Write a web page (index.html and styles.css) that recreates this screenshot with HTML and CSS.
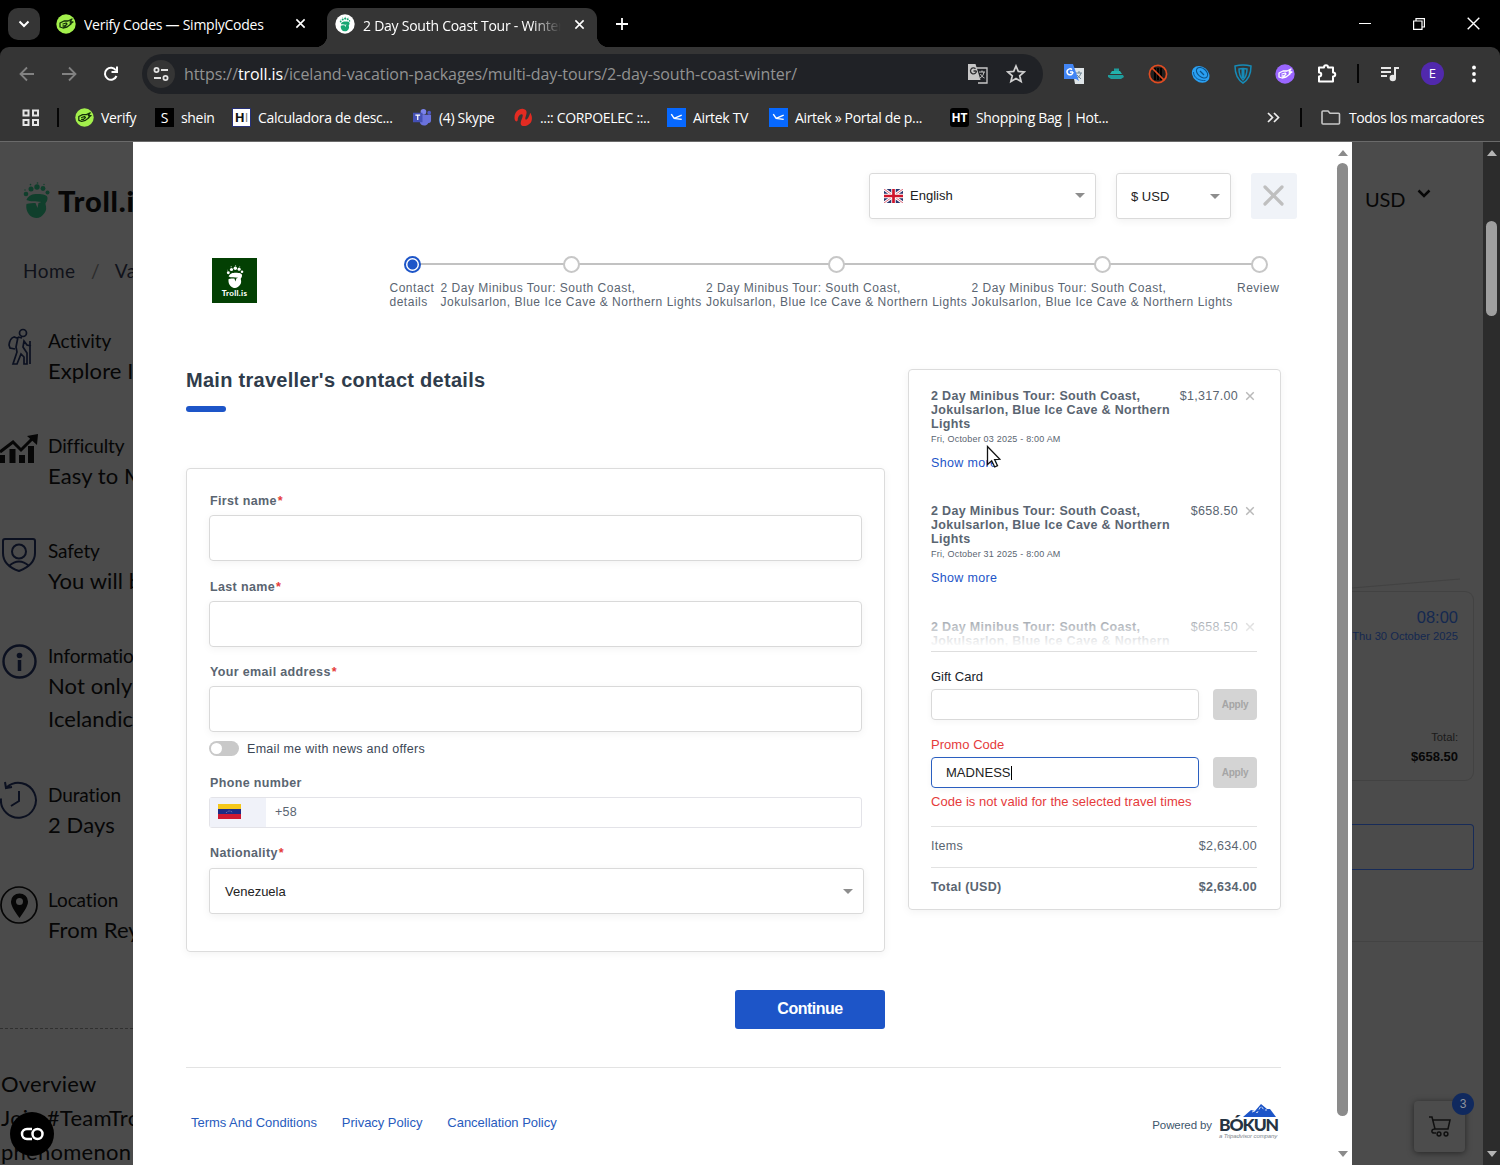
FILE: index.html
```html
<!DOCTYPE html>
<html lang="en">
<head>
<meta charset="utf-8">
<meta name="viewport" content="width=device-width,initial-scale=1">
<title>2 Day South Coast Tour - Winter</title>
<link rel="stylesheet" href="styles.css">
</head>
<body>
<svg class="defs" width="0" height="0">
<symbol id="paw" viewBox="0 0 26 36">
<circle cx="2.500" cy="12" r="2.300"/><circle cx="7.500" cy="7" r="2.500"/><circle cx="13.500" cy="5" r="2.700"/><circle cx="19.500" cy="6.500" r="2.400"/><circle cx="24" cy="10.500" r="2"/>
<circle cx="1.500" cy="8" r=".7"/><circle cx="7" cy="2.600" r=".8"/><circle cx="14" cy="1" r=".8"/><circle cx="20.500" cy="2.500" r=".7"/>
<path d="M3 18c2-5 6-6 11-6 6 0 10 1 10 4 0 4-2 4-2 6 1 4 1 6-1 9-2 3-5 5-8 5-5 0-9-4-10-9-.5-3 0-4 0-5 3-1 6-1 9-1l2 5 1-5 3-1c-6-1-11 0-15-2z"/>
</symbol>
<symbol id="hand" viewBox="0 0 20 20">
<path d="M4 9l4-2 4 0 4-2-2 3 3 0-3 2 1 0-4 3-4 1-3-1zM7 10l3-1 1 1-2 2-2 0" fill="none" stroke-width="1.300" stroke-linejoin="round" stroke-linecap="round"/>
</symbol>
<symbol id="cross" viewBox="0 0 12 12"><path d="M1.500 1.500l9 9M10.500 1.500l-9 9" fill="none" stroke="currentColor" stroke-width="1.700"/></symbol>
</svg>

<div class="tabs">
<div class="tab-menu"><svg width="12" height="8" viewBox="0 0 12 8"><path d="M1.500 1.500L6 6l4.500-4.500" fill="none" stroke="#fff" stroke-width="2"/></svg></div>
<div class="tab">
<svg class="fav" viewBox="0 0 20 20" stroke="#14300a"><circle cx="10" cy="10" r="9.700" fill="#a3f04c" stroke="none"/><use href="#hand"/></svg>
<span class="tab-title">Verify Codes — SimplyCodes</span>
<svg class="tab-x"><use href="#cross"/></svg>
</div>
<div class="tab active">
<svg class="fav" viewBox="0 0 20 20"><circle cx="10" cy="10" r="9.700" fill="#fff"/><use href="#paw" x="4.500" y="2.500" width="11" height="15" fill="#17a673"/></svg>
<span class="tab-title fade">2 Day South Coast Tour - Winter</span>
<svg class="tab-x"><use href="#cross"/></svg>
</div>
<svg class="new-tab" viewBox="0 0 14 14"><path d="M7 1v12M1 7h12" stroke="#fff" stroke-width="1.800"/></svg>
<div class="window-buttons">
<svg width="12" height="12"><path d="M0 5.500h12" stroke="#fff"/></svg>
<svg width="12" height="12" fill="none" stroke="#fff" stroke-width="1.200"><path d="M.6 3h8.400v8.400H.6zM3 3V.6h8.400V9H9"/></svg>
<svg width="13" height="13"><path d="M.7.7l11.600 11.600M12.300.7L.7 12.300" stroke="#fff" stroke-width="1.400"/></svg>
</div>
</div>

<div class="toolbar">
<div class="nav">
<svg width="16" height="16" fill="none" stroke="#828282" stroke-width="1.800"><path d="M15 8H2M8 1.500L1.500 8 8 14.500"/></svg>
<svg width="16" height="16" fill="none" stroke="#828282" stroke-width="1.800"><path d="M1 8h13M8 1.500L14.500 8 8 14.500"/></svg>
<svg width="16" height="16" fill="none" stroke="#fff" stroke-width="2"><path d="M13.500 10A6 6 0 1 1 13 4.500M14 .5V6H8.500"/></svg>
</div>
<div class="address">
<div class="site-info"><svg width="16" height="14" fill="none" stroke="#e3e3e3" stroke-width="1.800"><circle cx="3.500" cy="3" r="2.100"/><path d="M8 3h7M1 11h7"/><circle cx="12.500" cy="11" r="2.100"/></svg></div>
<span class="url">https://<b>troll.is</b>/iceland-vacation-packages/multi-day-tours/2-day-south-coast-winter/</span>
<svg class="translate" width="20" height="20" viewBox="0 0 20 20"><path d="M8 4h11v15H10" fill="none" stroke="#c7c7c7" stroke-width="1.300"/><path d="M0 0h7.500l5 16H0z" fill="#c7c7c7"/><path d="M8.500 7H5.500M8.500 7a3 3 0 1 1-1-2.300" fill="none" stroke="#303134" stroke-width="1.300"/><path d="M11 8h6M14 6.500V8M16 8c-.5 3-2 5-4 6M12.500 10c1 2 2 3 4 4" fill="none" stroke="#c7c7c7"/></svg>
<svg width="20" height="20" viewBox="0 0 20 20"><path d="M10 2l2.300 5.400 5.900.5-4.500 3.900 1.400 5.700-5.100-3-5.100 3 1.400-5.700L1.800 7.900l5.900-.5z" fill="none" stroke="#d0d0d0" stroke-width="1.700"/></svg>
</div>
<div class="extensions">
<svg viewBox="0 0 20 20"><path d="M8 4h12v16H11z" fill="#dfe5e8"/><path d="M12 9h6M15 7v2M17 9c-1 3-2 4-4 5M13 11l4 4" stroke="#6c8494" fill="none"/><path d="M0 0h9l6 17-3-2H0z" fill="#4285f4"/><path d="M9 8H6M9 8a3 3 0 1 1-1-2.400" fill="none" stroke="#fff" stroke-width="1.500"/></svg>
<svg viewBox="0 0 20 20"><path d="M2 11h15l1 2-3 2H5l-3-2z" fill="#1f9c9c"/><path d="M6 7h8l2 3H4z" fill="#23b3ac"/><path d="M8 4.500h5V7H8z" fill="#1f9c9c"/></svg>
<svg viewBox="0 0 20 20"><circle cx="10" cy="10" r="8.600" fill="#231f1d" stroke="#df4c22" stroke-width="1.700"/><path d="M7 4v12M10 4v12M13 4v12" stroke="#000" stroke-width="2"/><path d="M4 4l12 12" stroke="#df4c22" stroke-width="1.700"/></svg>
<svg viewBox="0 0 20 20"><ellipse cx="10" cy="10.500" rx="9.500" ry="7.700" transform="rotate(40 10 10)" fill="#2aa0f2"/><ellipse cx="11.500" cy="8.500" rx="6.500" ry="4.200" transform="rotate(40 11 8)" fill="none" stroke="#0d5288" stroke-width="1.100"/><path d="M9 7l4 4" stroke="#0d5288" stroke-width="1.300"/><path d="M2.500 8c0 6 6 9 12 8.500" stroke="#0d5b9b" fill="none"/></svg>
<svg viewBox="0 0 20 20" fill="none" stroke="#168bb7" stroke-width="1.500"><path d="M2 2q8-2 16 0 0 12-8 17Q2 14 2 2z"/><path d="M6 5q4-1 8 0 0 7-4 11Q6 12 6 5z"/><path d="M10 5v9" stroke-width="3"/></svg>
<svg viewBox="0 0 20 20" stroke="#fff"><circle cx="10" cy="10" r="9.700" fill="#9a66ff" stroke="none"/><use href="#hand"/></svg>
<svg viewBox="0 0 20 20" fill="none" stroke="#fff" stroke-width="2"><path d="M2 3.500h5c0-3 4-3 4 0h5v5c3 0 3 4 0 4v5H2v-5c3-.3 3-4 0-4z" stroke-linejoin="round"/></svg>
<i class="sep"></i>
<svg viewBox="0 0 20 20" fill="none" stroke="#e8e8e8" stroke-width="2"><path d="M1 4h10M1 8h10M1 12h6M15 14V4h4"/><circle cx="12.800" cy="14" r="2.200" fill="#e8e8e8"/></svg>
<span class="avatar">E</span>
<svg viewBox="0 0 20 20" fill="#fff"><circle cx="10" cy="3.500" r="1.900"/><circle cx="10" cy="10" r="1.900"/><circle cx="10" cy="16.500" r="1.900"/></svg>
</div>
</div>

<div class="bookmarks">
<svg width="18" height="18" fill="none" stroke="#e6e6e6" stroke-width="2"><path d="M1.500 1.500h5v5h-5zM11 1.500h5v5h-5zM1.500 11h5v5h-5zM11 11h5v5h-5z"/></svg>
<i class="sep"></i>
<a><svg class="bm" viewBox="0 0 20 20" stroke="#14300a"><circle cx="10" cy="10" r="9.700" fill="#a3f04c" stroke="none"/><use href="#hand"/></svg>Verify</a>
<a><span class="bm black">S</span>shein</a>
<a><span class="bm hi"><b>H</b>I</span>Calculadora de desc...</a>
<a><svg class="bm" viewBox="0 0 20 20"><circle cx="11" cy="4" r="3" fill="#7b83eb"/><circle cx="17" cy="5" r="2" fill="#5059c9"/><path d="M7 7h12v6c0 3-3 3-3 3-2 4-9 3-9-2z" fill="#6a72dc"/><rect x="0" y="5" width="10" height="10" fill="#4450b5"/><path d="M2.500 7.500h5M5 7.500v5" stroke="#fff" stroke-width="1.300"/></svg>(4) Skype</a>
<a><svg class="bm" viewBox="0 0 20 20"><path d="M1 13C-1 6 4 0 10 1c5 1 3 6 2 9-1 4 3 3 5-5 3 4 2 9 0 11-4 4-10 4-10 0 0-3 3-7 2-9-2-2-5 2-5 5 0 2-2 3-3 1z" fill="#e22b22"/></svg>..:: CORPOELEC ::..</a>
<a><svg class="bm" viewBox="0 0 20 20"><rect width="20" height="20" fill="#0668ff"/><path d="M4.500 6.500l3 4.500 8 1M7.500 11l8-3.500" fill="none" stroke="#fff" stroke-width="1.500"/></svg>Airtek TV</a>
<a><svg class="bm" viewBox="0 0 20 20"><rect width="20" height="20" fill="#0668ff"/><path d="M4.500 6.500l3 4.500 8 1M7.500 11l8-3.500" fill="none" stroke="#fff" stroke-width="1.500"/></svg>Airtek » Portal de p...</a>
<a><span class="bm black ht">HT</span>Shopping Bag | Hot...</a>
<svg width="13" height="11" fill="none" stroke="#eee" stroke-width="1.700"><path d="M1 1l4.500 4.500L1 10M7 1l4.500 4.500L7 10"/></svg>
<i class="sep"></i>
<a class="all"><svg width="20" height="15" fill="none" stroke="#c7c7c7" stroke-width="1.600"><path d="M1 2q0-1 1-1h5l2 2.200h8.500q1 0 1 1V13q0 1-1 1H2q-1 0-1-1z"/></svg>Todos los marcadores</a>
</div>

<div class="viewport">
<div class="page-left">
<div class="brand"><svg width="27" height="36" fill="#103f2c"><use href="#paw"/></svg>Troll.is</div>
<div class="crumbs">Home <span>/</span> Vacation</div>
<div class="facts">
<div class="fact">
<svg width="40" height="40" fill="none" stroke="#0b1020" stroke-width="1.700"><circle cx="23" cy="6" r="3.500"/><path d="M17 11l-3-1q-4 1-5 8l1 3 5 1M18 10l-2 10 1 5-4 12h4l4-10 3 3v7h3V26l-4-6 1-6 3 4 4 1M18 10l4 1M30 14v23"/></svg>
<div><p>Activity</p><strong>Explore Iceland</strong></div>
</div>
<div class="fact">
<svg width="40" height="40"><path d="M0 20l13-10 8 8L33 6" fill="none" stroke="#060606" stroke-width="3"/><path d="M27 4l11-2-1 11z" fill="#060606"/><path d="M2 31v-8M12.500 31V17M22 31v-8M31 31V14" stroke="#060606" stroke-width="6"/></svg>
<div><p>Difficulty</p><strong>Easy to Moderate</strong></div>
</div>
<div class="fact">
<svg width="40" height="40" fill="none" stroke="#0b1020" stroke-width="2"><path d="M3 4q0-2 2-2h28q2 0 2 2v12c0 9-8 15-16 18C10 31 3 25 3 16z"/><circle cx="19" cy="14.500" r="7"/><path d="M9 29q10-9 20 0"/></svg>
<div><p>Safety</p><strong>You will be safe</strong></div>
</div>
<div class="fact info">
<svg width="40" height="40" fill="none" stroke="#0b1020"><circle cx="19.500" cy="19.500" r="16" stroke-width="2.400"/><circle cx="19.500" cy="13.500" r="2.800" fill="#0b1020" stroke="none"/><path d="M19.500 18v11" stroke-width="3.500"/></svg>
<div><p>Information</p><strong>Not only see<br>Icelandic nature</strong></div>
</div>
<div class="fact">
<svg width="40" height="40" fill="none" stroke="#0b1020" stroke-width="2"><path d="M1 17.500A17.500 17.500 0 1 0 7 6M5 1l1 6 6-1M19 10v10l-8 5"/></svg>
<div><p>Duration</p><strong>2 Days</strong></div>
</div>
<div class="fact">
<svg width="40" height="40"><circle cx="19" cy="19" r="18" fill="none" stroke="#060606" stroke-width="1.700"/><path d="M19.500 32C14 24 11 20 11 15.500a8.500 8 0 0 1 17 0C28 20 25 24 19.500 32z" fill="#060606"/><circle cx="19.500" cy="15.500" r="3.500" fill="#4b4b4b"/></svg>
<div><p>Location</p><strong>From Reykjavik</strong></div>
</div>
</div>
<div class="overview">Overview<br>Join #TeamTroll<br>phenomenon</div>
<div class="chat"><svg width="24" height="14" fill="none" stroke="#fff" stroke-width="2.500"><path d="M12 2H7a5 5 0 0 0 0 10h5"/><circle cx="17.500" cy="7" r="5"/></svg></div>
</div>

<div class="modal">
<div class="modal-body">
<div class="modal-top">
<div class="select lang"><svg width="19" height="14" viewBox="0 0 19 14"><path d="M0 0h19v14H0z" fill="#28366f"/><path d="M0 0l19 14M19 0L0 14" stroke="#fff" stroke-width="3"/><path d="M0 0l19 14M19 0L0 14" stroke="#dc6578" stroke-width="1"/><path d="M9.500 0v14M0 7h19" stroke="#fff" stroke-width="4.500"/><path d="M9.500 0v14M0 7h19" stroke="#cf142b" stroke-width="2.700"/></svg>English</div>
<div class="select currency">$ USD</div>
<div class="close"><svg width="21" height="21" viewBox="0 0 21 21"><path d="M2 2l17 17M19 2L2 19" stroke="#bfbfbf" stroke-width="3.200" stroke-linecap="round"/></svg></div>
</div>
<div class="progress">
<div class="logo"><svg width="18" height="23" fill="#fff"><use href="#paw"/></svg>Troll.is</div>
<div class="steps">
<div class="step current"><i></i><span>Contact details</span></div>
<div class="step"><i></i><span>2 Day Minibus Tour: South Coast,<br>Jokulsarlon, Blue Ice Cave &amp; Northern Lights</span></div>
<div class="step"><i></i><span>2 Day Minibus Tour: South Coast,<br>Jokulsarlon, Blue Ice Cave &amp; Northern Lights</span></div>
<div class="step"><i></i><span>2 Day Minibus Tour: South Coast,<br>Jokulsarlon, Blue Ice Cave &amp; Northern Lights</span></div>
<div class="step"><i></i><span>Review</span></div>
</div>
</div>
<div class="columns">
<div class="main">
<h1>Main traveller's contact details</h1>
<form class="card contact">
<label>First name<em>*</em></label>
<div class="input"></div>
<label>Last name<em>*</em></label>
<div class="input"></div>
<label>Your email address<em>*</em></label>
<div class="input"></div>
<div class="news"><i class="toggle"></i>Email me with news and offers</div>
<label>Phone number</label>
<div class="phone"><span class="flag"><svg width="23" height="15"><path d="M0 0h23v5H0z" fill="#f5c81b"/><path d="M0 5h23v5H0z" fill="#1d2b85"/><path d="M0 10h23v5H0z" fill="#cf1931"/><path d="M8 9q3.500-4 7 0" fill="none" stroke="#8c93c4" stroke-dasharray="1 1"/></svg></span>+58</div>
<label>Nationality<em>*</em></label>
<div class="select nation">Venezuela</div>
</form>
<button class="continue">Continue</button>
</div>
<div class="card summary">
<div class="items">
<div class="item"><div class="item-row"><b>2 Day Minibus Tour: South Coast, Jokulsarlon, Blue Ice Cave &amp; Northern Lights</b><span>$1,317.00</span><svg><use href="#cross"/></svg></div><small>Fri, October 03 2025 - 8:00 AM</small><a>Show more</a></div>
<div class="item"><div class="item-row"><b>2 Day Minibus Tour: South Coast, Jokulsarlon, Blue Ice Cave &amp; Northern Lights</b><span>$658.50</span><svg><use href="#cross"/></svg></div><small>Fri, October 31 2025 - 8:00 AM</small><a>Show more</a></div>
<div class="item"><div class="item-row"><b>2 Day Minibus Tour: South Coast, Jokulsarlon, Blue Ice Cave &amp; Northern Lights</b><span>$658.50</span><svg><use href="#cross"/></svg></div></div>
</div>
<div class="code">
<p>Gift Card</p>
<div class="code-row"><div class="code-input"></div><button>Apply</button></div>
</div>
<div class="code error">
<p>Promo Code</p>
<div class="code-row"><div class="code-input">MADNESS<i></i></div><button>Apply</button></div>
<p class="message">Code is not valid for the selected travel times</p>
</div>
<div class="sum"><span>Items</span><span>$2,634.00</span></div>
<div class="sum total"><span>Total (USD)</span><span>$2,634.00</span></div>
<svg class="cursor" width="15" height="24"><path d="M1.500 1.500v18l4.200-3.800 3 6.300 2.800-1.300-2.900-6 5.300-.4z" fill="#fff" stroke="#111" stroke-width="1.300"/></svg>
</div>
</div>
<div class="footer">
<a>Terms And Conditions</a><a>Privacy Policy</a><a>Cancellation Policy</a>
<span class="powered">Powered by</span>
<div class="bokun"><svg width="34" height="14"><path d="M0 13L8 6l4 1 6-7 6 5 3 0 6 8z" fill="#1d55c8"/><path d="M9 8l3-1 2 2 4-7 3 4 3 0" fill="none" stroke="#fff" stroke-width=".8" stroke-dasharray="3 2"/></svg><b>BÓKUN</b><small>a Tripadvisor company</small></div>
</div>
</div>
<div class="scroll light"><i></i></div>
</div>

<div class="page-right">
<div class="usd">USD <svg width="14" height="9"><path d="M1.500 1.500L7 7l5.500-5.500" fill="none" stroke="#070707" stroke-width="2.500"/></svg></div>
<div class="booking">
<svg class="fold" width="108" height="11"><path d="M0 10L108 1" stroke="#424242"/></svg>
<div class="trip">
<div class="time">08:00</div>
<div class="date">Thu 30 October 2025</div>
<div class="total-label">Total:</div>
<div class="price">$658.50</div>
</div>
<div class="book-box"></div>
</div>
<div class="cart"><svg width="24" height="22" viewBox="0 0 24 22" fill="none" stroke="#101010" stroke-width="1.500"><path d="M1 1h3l3 12h13l2-9H5M7 13c-4 0-4 4-1 4h2"/><circle cx="11" cy="18" r="1.900"/><circle cx="18" cy="18" r="1.900"/></svg><span>3</span></div>
</div>
<div class="scroll dark"><i></i></div>
</div>
</body>
</html>
```
FILE: styles.css
```css
* {
    box-sizing: border-box;
}

html, body {
    overflow: hidden;
    margin: 0;
    padding: 0;
    width: 100%;
    height: 100%;
}

body {
    background: #000;
    font-family: "Liberation Sans", Arial, sans-serif;
    white-space: nowrap;
}

p, h1 {
    margin: 0;
}

svg {
    flex: none;
    display: block;
}

.defs {
    position: absolute;
}

/* browser chrome */
.tabs, .toolbar, .bookmarks {
    display: flex;
    align-items: center;
    color: #fff;
    font-family: "Open Sans", "Noto Sans", sans-serif;
    font-size: 14px;
}

.tabs {
    height: 47px;
    padding-left: 8px;
}

.tab-menu {
    width: 32px;
    height: 32px;
    border-radius: 10px;
    background: #353535;
    display: flex;
    align-items: center;
    justify-content: center;
}

.tab {
    display: flex;
    align-items: center;
    width: 287px;
    padding: 0 21px 0 16px;
}

.tab.active {
    position: relative;
    width: 270px;
    height: 39px;
    align-self: flex-end;
    padding: 0 12px 7px 8px;
    background: #353535;
    border-radius: 11px 11px 0 0;
}

.tab.active::before, .tab.active::after {
    content: "";
    position: absolute;
    bottom: 0;
    width: 12px;
    height: 12px;
}

.tab.active::before {
    left: -12px;
    background: radial-gradient(circle at 0 0, transparent 12px, #353535 12.5px);
}

.tab.active::after {
    right: -12px;
    background: radial-gradient(circle at 100% 0, transparent 12px, #353535 12.5px);
}

.fav {
    width: 20px;
    height: 20px;
    margin-right: 8px;
}

.tab-title {
    flex: 1;
    overflow: hidden;
    padding-top: 2px;
    letter-spacing: -0.25px;
}

.fade {
    margin-right: 13px;
    -webkit-mask-image: linear-gradient(90deg, #000 85%, transparent);
    mask-image: linear-gradient(90deg, #000 85%, transparent);
}

.tab-x {
    width: 11px;
    height: 11px;
}

.new-tab {
    width: 14px;
    height: 14px;
    margin-left: 18px;
}

.window-buttons {
    margin-left: auto;
    display: flex;
    align-items: center;
    gap: 42px;
    padding-right: 20px;
}

.toolbar {
    height: 53px;
    background: #353535;
    border-radius: 9px 9px 0 0;
}

.nav {
    display: flex;
    gap: 26px;
    padding-left: 19px;
    width: 142px;
}

.address {
    width: 901px;
    height: 40px;
    border-radius: 20px;
    background: #202226;
    display: flex;
    align-items: center;
    padding: 0 17px 0 5px;
}

.site-info {
    width: 28px;
    height: 28px;
    border-radius: 50%;
    background: #353535;
    display: flex;
    align-items: center;
    justify-content: center;
    margin-right: 9px;
}

.url {
    flex: 1;
    padding-top: 1px;
    color: #929292;
    font-size: 16px;
    letter-spacing: -0.08px;
}

.url b {
    color: #fff;
    font-weight: 400;
}

.translate {
    margin-right: 18px;
}

.extensions {
    display: grid;
    grid-template-columns: repeat(7, 42.2px) 20px 43px 42px 42px;
    align-items: center;
    justify-items: center;
    margin-left: 10px;
}

.extensions svg {
    width: 20px;
    height: 20px;
}

.sep {
    width: 2px;
    height: 19px;
    background: #050505;
}

.avatar {
    width: 23px;
    height: 23px;
    border-radius: 50%;
    background: #5129ad;
    font-size: 13px;
    line-height: 23px;
    text-align: center;
}

.bookmarks {
    display: grid;
    grid-template-columns: 35px 18px 80px 77px 181px 101px 153px 102px 181px 317px 33px 21px 170px;
    height: 42px;
    padding: 0 0 6px 22px;
    background: #353535;
    border-bottom: 1px solid #6a6a6a;
}

.bookmarks a {
    display: flex;
    align-items: center;
    letter-spacing: -0.33px;
}

.bookmarks .all {
    letter-spacing: -0.45px;
}

.all svg {
    margin-right: 8px;
}

.bm {
    width: 19px;
    height: 19px;
    margin-right: 7px;
    line-height: 19px;
    text-align: center;
    letter-spacing: 0;
    flex: none;
}

.black {
    background: #000;
}

.ht {
    border-radius: 3px;
    font-size: 12px;
    font-weight: 700;
}

.hi {
    background: #fff;
    color: #777;
    border: 1px solid #263078;
    line-height: 17px;
    font-size: 13px;
}

.hi b {
    color: #111;
}

/* viewport */
.viewport {
    display: flex;
    height: 1023px;
    background: #4b4b4b;
}

.page-left {
    position: relative;
    width: 133px;
    overflow: hidden;
    color: #060606;
    font-family: Lato, sans-serif;
    padding-top: 39px;
}

.brand {
    display: flex;
    align-items: center;
    height: 38px;
    padding-left: 23px;
    gap: 8px;
    font-size: 29px;
    font-weight: 900;
    letter-spacing: 0.8px;
}

.crumbs {
    padding-left: 23px;
    margin-top: 38px;
    line-height: 28px;
    font-size: 19px;
    letter-spacing: 0.5px;
    color: #10121a;
}

.crumbs span {
    margin: 0 10px;
    color: #2a2a2a;
}

.facts {
    margin-top: 42px;
    height: 702px;
    border-bottom: 1px dashed #303030;
}

.fact {
    display: flex;
    gap: 8px;
    height: 105px;
}

.fact.info {
    height: 139px;
}

.fact p {
    font-size: 19px;
    line-height: 28px;
    letter-spacing: -0.1px;
}

.fact strong {
    font-weight: 400;
    font-size: 22px;
    line-height: 32.5px;
    letter-spacing: 0.1px;
    display: block;
}

.overview {
    margin: 38px 0 0 1px;
    font-size: 22px;
    line-height: 34px;
    letter-spacing: 0.25px;
}

.chat {
    position: absolute;
    left: 10px;
    top: 970px;
    width: 44px;
    height: 44px;
    border-radius: 50%;
    background: #000;
    display: flex;
    align-items: center;
    justify-content: center;
}

/* checkout */
.modal {
    width: 1219px;
    background: #fff;
    display: flex;
    color: #5a6571;
}

.modal-body {
    width: 1201px;
    padding: 31px 53px 0 53px;
}

.modal-top {
    display: flex;
    gap: 20px;
    justify-content: flex-end;
    margin-right: -16px;
}

.select {
    display: flex;
    align-items: center;
    height: 46px;
    padding-left: 15px;
    border: 1px solid #dadada;
    border-radius: 3px;
    box-shadow: 0 2px 8px rgba(0, 0, 0, 0.06);
    color: #222;
    font-size: 13px;
}

.select::after {
    content: "";
    margin: 0 10px 0 auto;
    border: 5px solid transparent;
    border-top-color: #8d8d8d;
    border-bottom: 0;
}

.lang {
    width: 227px;
    padding-left: 14px;
    padding-bottom: 1px;
    gap: 7px;
}

.currency {
    width: 115px;
    padding-left: 14px;
    padding-top: 1px;
}

.close {
    width: 46px;
    height: 46px;
    padding: 0 1px 1px 0;
    background: #f0f3f8;
    border-radius: 3px;
    display: flex;
    align-items: center;
    justify-content: center;
}

.progress {
    display: flex;
    height: 113px;
    margin-top: 36px;
    padding-left: 26px;
}

.logo {
    width: 46px;
    height: 45px;
    margin: 3px 132.5px 0 0;
    background: #034003;
    color: #fff;
    display: flex;
    flex-direction: column;
    align-items: center;
    padding-top: 7px;
    font: 900 8px/10px Lato, sans-serif;
    letter-spacing: 0.3px;
}

.steps {
    position: relative;
    display: grid;
    grid-template-columns: 46.5px 261px 261px 261px 44px;
    gap: 4.5px;
    font-size: 12px;
    line-height: 14px;
    letter-spacing: 0.51px;
}

.steps::before {
    content: "";
    position: absolute;
    left: 23px;
    right: 22px;
    top: 8px;
    height: 2px;
    background: #c2c2c2;
}

.step {
    display: flex;
    flex-direction: column;
    align-items: center;
}

.step i {
    position: relative;
    width: 17px;
    height: 17px;
    border: 2px solid #c7c7c7;
    border-radius: 50%;
    background: #fff;
    margin: 1px 0 8px;
}

.step.current i {
    border: 2px solid #1d55c8;
    background: radial-gradient(circle, #1d55c8 4.5px, #fff 5.5px);
}

.step.current span {
    width: 46px;
    white-space: normal;
}

.step span {
    align-self: flex-start;
}

.columns {
    display: flex;
    gap: 23px;
    align-items: flex-start;
}

.main {
    width: 699px;
    height: 700px;
    display: flex;
    flex-direction: column;
}

h1 {
    color: #2f3c4b;
    font-size: 20px;
    line-height: 24px;
    height: 100px;
    letter-spacing: 0.28px;
}

h1::after {
    content: "";
    display: block;
    width: 40px;
    height: 6px;
    margin-top: 14px;
    border-radius: 3px;
    background: #1d55c8;
}

.card {
    border: 1px solid #dcdcdc;
    border-radius: 4px;
    box-shadow: 0 2px 8px rgba(0, 0, 0, 0.05);
}

.contact {
    height: 484px;
    padding: 24px 20px 0 22px;
}

label {
    display: block;
    line-height: 16px;
    margin: 0 0 6px 1px;
    font-size: 12.5px;
    font-weight: 700;
    letter-spacing: 0.35px;
}

label em {
    color: #e53b3b;
    font-style: normal;
    margin-left: 1px;
}

.input {
    width: 653px;
    height: 46px;
    margin-bottom: 17.5px;
    border: 1px solid #d9d9d9;
    border-radius: 4px;
    box-shadow: 0 2px 8px rgba(0, 0, 0, 0.05);
}

.news {
    display: flex;
    align-items: center;
    height: 16px;
    margin: -9px 0 18px;
    color: #3c4756;
    font-size: 12.5px;
    letter-spacing: 0.3px;
    gap: 8px;
}

.toggle {
    width: 30px;
    height: 15px;
    border-radius: 8px;
    padding: 2px;
    background: #c9c9c9;
}

.toggle::after {
    content: "";
    display: block;
    width: 11px;
    height: 11px;
    border-radius: 50%;
    background: #fff;
}

.phone {
    display: flex;
    align-items: center;
    gap: 9px;
    width: 653px;
    height: 31px;
    margin-bottom: 17px;
    border: 1px solid #e3e3e8;
    border-radius: 3px;
    font-size: 12.5px;
    letter-spacing: 0.3px;
}

.flag {
    width: 56px;
    height: 29px;
    padding: 6px 0 0 8px;
    background: #f0f2f9;
}

.nation {
    width: 655px;
    margin-top: 7px;
    padding-top: 2px;
}

.continue {
    width: 150px;
    height: 39px;
    margin: 38px 0 0 auto;
    padding-bottom: 2px;
    border: 0;
    border-radius: 3px;
    background: #1d55c8;
    color: #fff;
    font: 700 16px "Liberation Sans", sans-serif;
    letter-spacing: -0.5px;
}

.summary {
    position: relative;
    width: 373px;
    height: 541px;
    padding: 19px 23px 0 22px;
    margin-top: 1px;
}

.items {
    position: relative;
    height: 263px;
    overflow: hidden;
    border-bottom: 1px solid #dedede;
}

.items::after {
    content: "";
    position: absolute;
    left: 0;
    right: 0;
    bottom: 0;
    height: 38px;
    background: linear-gradient(rgba(255, 255, 255, 0.3), #fff 90%);
}

.item {
    height: 115.3px;
    font-size: 12.5px;
    line-height: 14px;
}

.item-row {
    display: flex;
    letter-spacing: 0.3px;
}

.item b {
    width: 242px;
    white-space: normal;
    letter-spacing: 0.32px;
}

.item-row span {
    margin-left: auto;
}

.item-row svg {
    width: 10px;
    height: 10px;
    margin: 2px 2px 0 7px;
    color: #b8b8b8;
}

.item small {
    display: block;
    font-size: 9px;
    line-height: 16px;
    letter-spacing: 0.2px;
}

.item a {
    display: block;
    margin-top: 9px;
    color: #1d55c8;
    letter-spacing: 0.33px;
}

.cursor {
    position: absolute;
    left: 77px;
    top: 75px;
}

.code {
    height: 68px;
    padding-top: 17px;
    color: #20242c;
    font-size: 13px;
    line-height: 16px;
}

.code-row {
    display: flex;
    gap: 14px;
    margin-top: 4px;
}

.code-input {
    display: flex;
    align-items: center;
    width: 268px;
    height: 31px;
    padding-left: 14px;
    border: 1px solid #d9d9d9;
    border-radius: 4px;
    box-shadow: 0 2px 6px rgba(0, 0, 0, 0.04);
    color: #222;
}

.code-input i {
    width: 1px;
    height: 14px;
    background: #000;
}

.code-row button {
    width: 44px;
    height: 31px;
    padding: 0 0 1px;
    border: 0;
    border-radius: 4px;
    background: #d4d4d4;
    color: #a5a5a5;
    font: 700 10px "Liberation Sans", sans-serif;
    letter-spacing: -0.3px;
}

.error {
    height: 106px;
    color: #e53b3b;
    letter-spacing: 0.04px;
}

.error .code-input {
    border: 1.5px solid #2b5fc0;
}

.message {
    margin-top: 6px;
}

.sum {
    display: flex;
    justify-content: space-between;
    height: 41px;
    border-top: 1px solid #e2e2e2;
    line-height: 39px;
    font-size: 12.5px;
    letter-spacing: 0.3px;
}

.total {
    font-weight: 700;
}

.footer {
    display: flex;
    width: 1095px;
    height: 98px;
    padding: 12px 4px 0 5px;
    border-top: 1px solid #e3e3e3;
    margin-top: -1px;
    align-items: center;
    gap: 25px;
    font-size: 13px;
}

.footer a {
    color: #285bbd;
    letter-spacing: -0.03px;
}

.powered {
    margin: 5px -18px 0 auto;
    color: #41566c;
    font-size: 11.5px;
    letter-spacing: -0.1px;
}

.bokun {
    display: flex;
    flex-direction: column;
    width: 58px;
    color: #253442;
}

.bokun svg {
    align-self: flex-end;
}

.bokun b {
    font: 900 17.5px/14px Lato, sans-serif;
    letter-spacing: -1.1px;
}

.bokun small {
    font-size: 6px;
    line-height: 9px;
    font-style: italic;
    letter-spacing: -0.1px;
    color: #7d858c;
}

/* scrollbars */
.scroll {
    width: 17px;
    display: flex;
    flex-direction: column;
    align-items: center;
}

.scroll::before, .scroll::after {
    content: "";
    border: 5.5px solid transparent;
}

.scroll::before {
    margin-top: 8px;
    border-top: 0;
    border-bottom: 6px solid #8b8b8b;
}

.scroll::after {
    margin: auto 0 8px;
    border-bottom: 0;
    border-top: 6px solid #8b8b8b;
}

.scroll i {
    width: 11px;
    border-radius: 6px;
    background: #8b8b8b;
}

.light i {
    height: 953px;
    margin-top: 7px;
}

.dark {
    background: #2c2c2c;
}

.dark i {
    height: 95px;
    margin-top: 65px;
    background: #9f9f9f;
}

.dark::before {
    border-bottom-color: #b5b5b5;
}

.dark::after {
    border-top-color: #b5b5b5;
}

/* page behind, right side */
.page-right {
    position: relative;
    width: 131px;
    padding-top: 43px;
    color: #070707;
}

.usd {
    display: flex;
    gap: 12px;
    padding-left: 13px;
    font: 20px/28px Lato, sans-serif;
    letter-spacing: -0.2px;
}

.usd svg {
    margin-top: 4px;
}

.booking {
    height: 434px;
    padding-top: 71px;
    margin-top: 295px;
    border-bottom: 1px solid #434343;
}

.fold {
    margin: -1px 0 2px;
}

.trip {
    width: 122px;
    height: 190px;
    border: 1px solid #424242;
    border-left: 0;
    border-radius: 0 9px 9px 0;
    padding: 15px 15px 0 0;
    display: flex;
    flex-direction: column;
    align-items: flex-end;
}

.time, .date {
    color: #142850;
}

.time {
    font-size: 16.5px;
    line-height: 20px;
}

.date {
    font-size: 11.2px;
    line-height: 18px;
}

.total-label {
    margin-top: 83px;
    color: #1a1a1a;
    font-size: 11.2px;
    line-height: 18px;
}

.price {
    font-size: 13px;
    font-weight: 700;
    line-height: 22px;
}

.book-box {
    width: 122px;
    height: 46px;
    margin-top: 43px;
    border: 1.5px solid #172b58;
    border-left: 0;
    border-radius: 0 4px 4px 0;
}

.cart {
    position: absolute;
    left: 62px;
    top: 959px;
    width: 51px;
    height: 51px;
    border-radius: 4px;
    background: #4c4c4c;
    box-shadow: 0 1px 6px rgba(0, 0, 0, 0.5);
    display: flex;
    align-items: center;
    justify-content: center;
}

.cart span {
    position: absolute;
    right: -9px;
    top: -8px;
    width: 22px;
    height: 22px;
    border-radius: 50%;
    background: #10295e;
    color: #8f949c;
    font-size: 12px;
    line-height: 22px;
    text-align: center;
}
```
